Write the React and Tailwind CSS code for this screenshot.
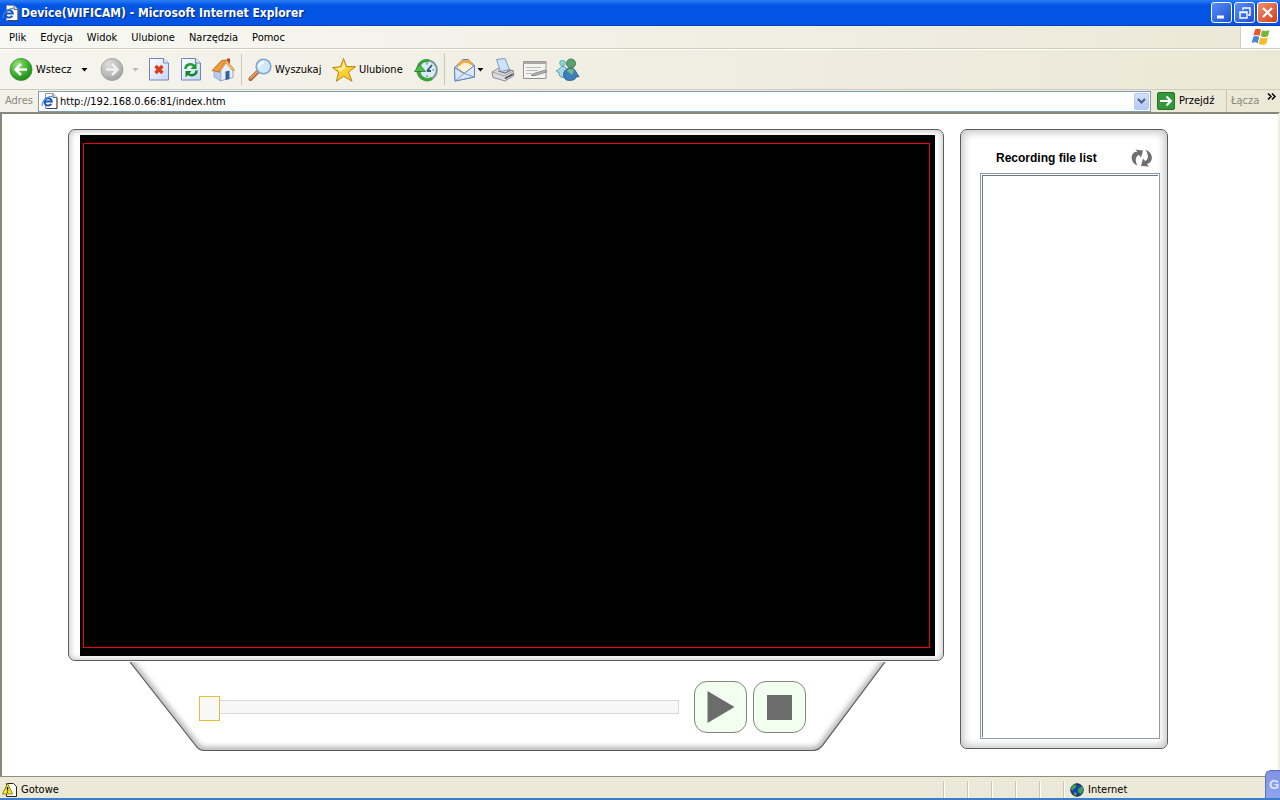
import React, { useState } from 'react'

/* ---------- icons ---------- */

const IePage = ({ className }) => (
  <svg className={className} width="17" height="16" viewBox="0 0 17 16">
    <path d="M4.500 .5h7.500l4 4v11h-11.500z" fill="#fff" stroke="#999" />
    <path d="M16 5v10.500H5.500" fill="none" stroke="#444" />
    <path d="M12 .5v4h4" fill="#ddd" stroke="#666" />
    <path d="M10.300 10.800A3.700 3.700 0 1 1 10.800 8.500H4.500" fill="none" stroke="#1c55b8" strokeWidth="2" />
    <path d="M1.500 13C-.5 10 6 3 11.500 3.500" fill="none" stroke="#3f8be0" strokeWidth="1.200" />
  </svg>
)

const RoundArrow = ({ grey }) => (
  <svg width="24" height="24" viewBox="0 0 24 24">
    <defs>
      <radialGradient id={grey ? 'raGrey' : 'raGreen'} cx="0.350" cy="0.250" r="0.850">
        <stop offset="0" stopColor={grey ? '#dcdcdc' : '#8fe070'} />
        <stop offset="0.600" stopColor={grey ? '#b9b9b9' : '#3aac2a'} />
        <stop offset="1" stopColor={grey ? '#989898' : '#17801a'} />
      </radialGradient>
    </defs>
    <circle cx="12" cy="11.500" r="11" fill={grey ? 'url(#raGrey)' : 'url(#raGreen)'} stroke={grey ? '#9a9a9a' : '#3b8a34'} strokeWidth="0.800" />
    <path d={grey ? 'M6 11.500h11M12 6l5.500 5.500-5.500 5.500' : 'M18 11.500H7M12 6L6.500 11.500l5.500 5.500'} fill="none" stroke={grey ? '#f1f1f1' : '#fff'} strokeWidth="2.600" />
  </svg>
)

const Sheet = ({ children }) => (
  <svg width="20" height="24" viewBox="0 0 20 24">
    <defs>
      <linearGradient id="sheet" x1="0" y1="0" x2="1" y2="1">
        <stop offset="0" stopColor="#fff" />
        <stop offset="1" stopColor="#c3d6f6" />
      </linearGradient>
    </defs>
    <path d="M.5 .5h14l5 4.500v17H.5z" fill="url(#sheet)" stroke="#7484b8" />
    <path d="M14.500 .5V5h5" fill="#e3ebfa" stroke="#7484b8" />
    {children}
  </svg>
)

const StopIcon = () => (
  <Sheet>
    <path d="M6.500 8l7 7M13.500 8l-7 7" stroke="#e03a1c" strokeWidth="3.400" />
  </Sheet>
)

const ReloadIcon = () => (
  <Sheet>
    <path d="M4.500 11c0-5 6-6 8.500-3" fill="none" stroke="#1f9a2c" strokeWidth="2.400" />
    <path d="M15.500 4.500V11H9.500z" fill="#1f9a2c" />
    <path d="M15.500 12.500c0 5-6 6-8.500 3" fill="none" stroke="#15842a" strokeWidth="2.400" />
    <path d="M4.500 19.500V13h6z" fill="#15842a" />
  </Sheet>
)

const HomeIcon = () => (
  <svg width="24" height="24" viewBox="0 0 24 24">
    <path d="M16 .5h3V8h-3z" fill="#c0432a" />
    <path d="M3 12l6 11 13-3.500V11L16 4z" fill="#e9f0fc" stroke="#7d93bd" strokeWidth="0.800" />
    <path d="M3 12v7l7 4V13z" fill="#b7caec" stroke="#7d93bd" strokeWidth="0.600" />
    <path d="M14.500 13.500l4-1V21l-4 1z" fill="#3460a8" />
    <path d="M1 12.500L10.500 2.500l5-.5L8 14z" fill="#eb9a3c" stroke="#b56a20" strokeWidth="0.800" />
    <path d="M15.500 2L23.500 12l-1.500 1-7-8-6.500 9.500L8 13z" fill="#f6c377" stroke="#c47b30" strokeWidth="0.700" />
  </svg>
)

const SearchIcon = () => (
  <svg width="24" height="24" viewBox="0 0 24 24">
    <path d="M2.500 21l7-7" stroke="#a85f35" strokeWidth="4" strokeLinecap="round" />
    <path d="M2.500 20.500l6.500-6.500" stroke="#e29a62" strokeWidth="2" strokeLinecap="round" />
    <circle cx="15.500" cy="8.500" r="7.300" fill="#cfeafc" stroke="#7ba6d6" strokeWidth="1.600" />
    <path d="M11 9a4.500 4.500 0 0 1 5-4.500" fill="none" stroke="#fff" strokeWidth="2.200" />
  </svg>
)

const StarIcon = () => (
  <svg width="24" height="24" viewBox="0 0 24 24">
    <path d="M11.500 .5l3 8 9 .2-7 5.500 3.500 9-8.500-5-7 5 2-9L.5 9.500l8-.7z" fill="#fcd030" stroke="#b98212" />
    <path d="M11.500 4l2 6-5 4-4-4 5.500-.5z" fill="#fff0a0" />
  </svg>
)

const HistoryIcon = () => (
  <svg width="24" height="24" viewBox="0 0 24 24">
    <circle cx="13" cy="12" r="9.800" fill="#d9ecf5" stroke="#7f969e" strokeWidth="2" />
    <path d="M13 5v1.500M20 12h-1.500M13 19v-1.500" stroke="#456" />
    <path d="M13 13l5-6M13 13h4" stroke="#335a78" strokeWidth="1.800" />
    <path d="M18 20.500C11 24 4.500 19 5 12.500" fill="none" stroke="#38a338" strokeWidth="3.400" />
    <path d="M15 3C9.500 1.500 5 5 5 9" fill="none" stroke="#38a338" strokeWidth="3" />
    <path d="M.5 13.500L5.500 6.500l6 7z" fill="#4fbe46" stroke="#207f28" strokeWidth="0.800" />
  </svg>
)

const MailIcon = () => (
  <svg width="24" height="24" viewBox="0 0 24 24">
    <path d="M1.500 9.500L10 1.500h5l6.500 6V19L2 23z" fill="#b5d2f5" stroke="#5f83bb" />
    <path d="M4 10l3-6 9-1.500 4 6-8 7z" fill="#fff3d8" stroke="#d09a4c" strokeWidth="0.800" />
    <path d="M5.500 7.500C8 2.500 15 2 18.500 6" fill="none" stroke="#f1aa3e" strokeWidth="2.800" />
    <path d="M1.500 9.500l9.500 6 10.500-8V19L2 23z" fill="#d9e9fb" stroke="#5f83bb" />
    <path d="M2 23l9-7.500L21.500 19" fill="none" stroke="#7b9fd2" />
  </svg>
)

const PrintIcon = () => (
  <svg width="24" height="24" viewBox="0 0 24 24">
    <path d="M1 14l7-4 14 2.500 1 5-9 5.500-12-3.500z" fill="#dcdcde" stroke="#85858b" strokeWidth="0.900" />
    <path d="M5.500 1.500L14 .5l4.500 11-9 2z" fill="#cfe2fb" stroke="#7292c6" strokeWidth="0.900" />
    <path d="M1 14l12.500 4L23 12.500" fill="none" stroke="#9e9ea4" />
    <path d="M7 13l7 2 6-3" fill="none" stroke="#77777c" strokeWidth="1.200" />
    <path d="M14 20.500l8-4.500" stroke="#4c4c50" strokeWidth="1.600" />
  </svg>
)

const EditIcon = () => (
  <svg width="24" height="24" viewBox="0 0 24 24">
    <path d="M.5 3.500h22.500v17H.5z" fill="#f3f3f1" stroke="#929292" />
    <path d="M.5 3.500h22.500v2.500H.5z" fill="#a8a8a8" />
    <path d="M3 9.500h15M3 12.500h12M3 15.500h6" stroke="#bbb" />
    <path d="M8 17.500l3-2 11.500-3.500 1 2L12 17.500z" fill="#bbb" stroke="#777" strokeWidth="0.800" />
  </svg>
)

const PeopleIcon = () => (
  <svg width="26" height="24" viewBox="0 0 26 24">
    <circle cx="7.500" cy="5" r="2.800" fill="#8fd6d0" stroke="#58a0aa" strokeWidth="0.800" />
    <path d="M1 12.500c3 1 3-4 7-4s4 4 4 8l-4 3c-3 0-4-2-4-5-1 0-2-1-3-2z" fill="#a5d9e5" stroke="#408c99" strokeWidth="0.800" />
    <path d="M8.500 17c0-4 3-7 7.500-7 4 0 4.500 4 8 8.500l-3 .5c0 2-3 3.500-6.500 3.500s-6-2-6-5.500z" fill="#3b7fb8" stroke="#24567f" strokeWidth="0.800" />
    <path d="M12 13c1-3 6-3 7 0l-2 4z" fill="#74b98a" />
    <circle cx="16" cy="5.500" r="4.500" fill="#5aa267" stroke="#2d6a55" strokeWidth="0.800" />
  </svg>
)

const WindowsFlag = () => (
  <svg width="20" height="18" viewBox="0 0 20 18">
    <path d="M4 1.500C6 .3 8 .5 10 1.700L8.500 8C6.500 6.700 4.500 6.800 2.500 7.800z" fill="#e8562a" />
    <path d="M11 2.200c2 1 4.500 1.200 7.500-.2L17 8.300c-3 1.200-5 1-7.300 0z" fill="#7ab536" />
    <path d="M2.200 8.800c2-1 4-1 6 .2L6.700 15.300c-2-1.200-4-1.200-6-.2z" fill="#4a86d8" />
    <path d="M9.300 9.400c2.500 1 5 1 7.500 0L15.200 16c-2.500 1-5 1-7.500-.2z" fill="#f6bd28" />
  </svg>
)

const SyncIcon = () => (
  <svg width="22" height="18" viewBox="0 0 22 18">
    <path d="M6.500 16.500C-2 13 -.5 2.500 6.500 2.500L4.500 .5 12 1.500 10 8.500 8 6C4 7.500 4 12.500 6.500 16.500z" fill="#6f6f6f" />
    <path d="M14.500 1C23 3.500 22.500 14 16 15l2 2.500-8-.5 2-7.500 2 2.500c4-1.500 3.500-7 .5-11z" fill="#6f6f6f" />
  </svg>
)

const GlobeIcon = () => (
  <svg width="14" height="14" viewBox="0 0 14 14">
    <circle cx="7" cy="7" r="6.200" fill="#1b3fae" stroke="#101c38" />
    <path d="M3 2c3-1 4 0 3 2s-3 2-4 4C.5 6 1 3.500 3 2zM8 6l4-3c2 3 1 6-1 8L8 9zM4 9l3 1-1 3-2-1z" fill="#39a44a" />
  </svg>
)

const WarnPage = () => (
  <svg width="16" height="16" viewBox="0 0 16 16">
    <path d="M4.500 1.500h7l3 3v10h-10z" fill="#fff" stroke="#222" />
    <path d="M5.500 1.500l5 10.500H.5z" fill="#f7ee1d" stroke="#8b8412" />
    <path d="M5.500 5V8.500M5.500 9.500v1.300" stroke="#111" strokeWidth="1.400" />
  </svg>
)

/* ---------- browser chrome ---------- */

const Caret = ({ className = 'text-black' }) => (
  <svg className={className} width="7" height="4" viewBox="0 0 7 4">
    <path d="M.5 0h6l-3 3.500z" fill="currentColor" />
  </svg>
)

const Separator = () => <div className="w-px self-stretch my-1 bg-[#c9c6b4]" />

const windowButtons = [
  { label: 'Minimize', color: 'bg-linear-to-br from-[#5a8df5] to-[#1d4fd6]', icon: <path d="M5 14h7" strokeWidth="3" /> },
  { label: 'Restore', color: 'bg-linear-to-br from-[#5a8df5] to-[#1d4fd6]', icon: <path d="M8 7V5h7v7h-2M5 9h7v6H5zM5 9.500h7" strokeWidth="1.400" /> },
  { label: 'Close', color: 'bg-linear-to-br from-[#ee8f6e] to-[#cf3c14]', icon: <path d="M5 5l9 9M14 5l-9 9" strokeWidth="2.200" /> },
]

const menus = ['Plik', 'Edycja', 'Widok', 'Ulubione', 'Narzędzia', 'Pomoc']

const TitleBar = () => (
  <header className="h-[26px] flex items-center pl-[2px] pr-[2px] bg-linear-to-b from-[#2a7ff5] from-0% via-[#0355e6] via-20% to-[#0453e4] border-b border-[#0342b8]">
    <IePage />
    <h1 className="ml-[2px] flex-1 text-[12px] font-bold text-white whitespace-nowrap [text-shadow:1px_1px_1px_#06257c]">
      Device(WIFICAM) - Microsoft Internet Explorer
    </h1>
    <div className="flex gap-[2px]">
      {windowButtons.map((b) => (
        <button key={b.label} aria-label={b.label} className={`size-[21px] rounded-[3px] border border-white ${b.color}`}>
          <svg width="19" height="19" viewBox="0 0 19 19" fill="none" stroke="#fff">{b.icon}</svg>
        </button>
      ))}
    </div>
  </header>
)

const MenuBar = () => (
  <nav className="h-[23px] flex items-stretch bg-linear-to-r from-[#f8f8f4] to-[#ebe8d7] border-b border-[#d0cdbb]">
    <div className="flex flex-1 items-center gap-[14px] pl-[9px] pt-[2px]">
      {menus.map((m) => <button key={m}>{m}</button>)}
    </div>
    <div className="w-10 flex items-center justify-center bg-white border-l border-[#d0cdbb]">
      <WindowsFlag />
    </div>
  </nav>
)

const ToolBar = () => (
  <div className="h-10 flex items-center pl-[9px] bg-linear-to-r from-[#f5f4ee] to-[#ebe8d7] border-t border-white">
    <button className="w-[72px] flex items-center gap-[3px]"><RoundArrow />Wstecz</button>
    <button aria-label="Wstecz - lista" className="w-[19px]"><Caret /></button>
    <button aria-label="Dalej" className="w-8"><RoundArrow grey /></button>
    <button aria-label="Dalej - lista" className="w-[17px]"><Caret className="text-[#b9b7a8]" /></button>
    <button aria-label="Zatrzymaj" className="w-8"><StopIcon /></button>
    <button aria-label="Odśwież" className="w-[30px]"><ReloadIcon /></button>
    <button aria-label="Strona główna" className="w-[30px]"><HomeIcon /></button>
    <Separator />
    <button className="ml-[6px] w-[84px] flex items-center gap-[3px]"><SearchIcon />Wyszukaj</button>
    <button className="w-[82px] flex items-center gap-[3px]"><StarIcon />Ulubione</button>
    <button aria-label="Historia" className="w-[30px]"><HistoryIcon /></button>
    <Separator />
    <button aria-label="Poczta" className="ml-2 w-[38px] flex items-center"><MailIcon /><Caret /></button>
    <button aria-label="Drukuj" className="w-8"><PrintIcon /></button>
    <button aria-label="Edytuj" className="w-8"><EditIcon /></button>
    <button aria-label="Messenger"><PeopleIcon /></button>
  </div>
)

const AddressBar = () => {
  const [url, setUrl] = useState('http://192.168.0.66:81/index.htm')

  return (
    <div className="h-[23px] flex items-center pl-[5px] bg-linear-to-r from-[#f3f2ea] to-[#ebe8d7] border-t border-[#d0cdbb]">
      <label htmlFor="address" className="w-[33px] text-[#8a887c]">Adres</label>
      <div className="flex-1 h-[21px] flex items-center gap-[2px] pl-[2px] pr-px bg-white border border-[#7f9db9]">
        <IePage className="shrink-0" />
        <input id="address" value={url} onChange={(e) => setUrl(e.target.value)} className="flex-1 min-w-0 pt-[2px] outline-none" />
        <button aria-label="Lista adresów" className="w-[15px] h-[17px] flex items-center justify-center rounded-[2px] bg-linear-to-b from-[#d3dffb] to-[#b4c8f6] border border-[#b7caf5]">
          <svg width="9" height="6" viewBox="0 0 9 6"><path d="M1 1l3.500 3.500L8 1" fill="none" stroke="#4d6185" strokeWidth="2" /></svg>
        </button>
      </div>
      <button className="ml-[6px] w-[69px] flex items-center gap-1">
        <svg width="18" height="18" viewBox="0 0 18 18">
          <rect x=".5" y=".5" width="17" height="17" rx="1.500" fill="#35953a" stroke="#1f7526" />
          <path d="M3 9h11M9.500 4.500L14 9l-4.500 4.500" fill="none" stroke="#fff" strokeWidth="2" />
        </svg>
        Przejdź
      </button>
      <div className="w-px self-stretch bg-[#c9c6b4]" />
      <button className="ml-1 w-9 text-left text-[#8a887c]">Łącza</button>
      <button aria-label="Więcej" className="w-[13px] self-start pt-[3px]">
        <svg width="9" height="7" viewBox="0 0 9 7"><path d="M1 .5l3 3-3 3M5 .5l3 3-3 3" fill="none" stroke="#000" strokeWidth="1.500" /></svg>
      </button>
    </div>
  )
}

/* ---------- camera page ---------- */

const Player = () => {
  const [position, setPosition] = useState(0)

  return (
    <section className="flex-1 min-w-0">
      <div className="rounded-[7px] border border-[#5c5c5c] pt-[5px] pb-1 pl-[11px] pr-2 bg-white shadow-[inset_0_0_6px_1px_#c4c4c4]">
        <div className="aspect-[855/521] bg-black py-2 pl-[3px] pr-[5px]">
          <div className="h-full border border-[#f00014]" />
        </div>
      </div>

      <div className="relative mt-px ml-[61px] mr-[58px] pt-[19px] pb-[18px] pl-[70px] pr-[80px]">
        <svg className="absolute inset-0 size-full" viewBox="0 0 757 89" preserveAspectRatio="none">
          <defs>
            <clipPath id="trayClip"><path d="M1 0L67 84Q70 88.500 76 88.500H684Q689 88.500 693 84L756 0z" /></clipPath>
            <filter id="trayBlur" x="-5%" y="-20%" width="110%" height="140%"><feGaussianBlur stdDeviation="2.500" /></filter>
          </defs>
          <g clipPath="url(#trayClip)">
            <path d="M-7 -10L67 84Q70 88.500 76 88.500H684Q689 88.500 693 84L764 -10" fill="none" stroke="#bbb" strokeWidth="8" filter="url(#trayBlur)" />
          </g>
          <path d="M1 0L67 84Q70 88.500 76 88.500H684Q689 88.500 693 84L756 0" fill="none" stroke="#5c5c5c" strokeWidth="1.200" />
        </svg>

        <div className="relative flex items-center">
          <input
            type="range"
            aria-label="Position"
            value={position}
            onChange={(e) => setPosition(Number(e.target.value))}
            className="flex-1 min-w-0 mr-[15px] h-[24px] appearance-none bg-transparent [&::-webkit-slider-runnable-track]:h-[14px] [&::-webkit-slider-runnable-track]:bg-[#f7f7f7] [&::-webkit-slider-runnable-track]:shadow-[inset_0_0_0_1px_#d9d9d9] [&::-webkit-slider-thumb]:appearance-none [&::-webkit-slider-thumb]:w-[21px] [&::-webkit-slider-thumb]:h-[25px] [&::-webkit-slider-thumb]:-mt-1 [&::-webkit-slider-thumb]:bg-[#f8f8f8] [&::-webkit-slider-thumb]:border [&::-webkit-slider-thumb]:border-[#e6bf30]"
          />
          <div className="flex gap-[6px]">
            <button aria-label="Play" className="w-[53px] h-[52px] flex items-center justify-center rounded-[13px] border border-[#7d8a7b] bg-[#f2fff0]">
              <svg width="28" height="32" viewBox="0 0 28 32"><path d="M.5 0v32L27.500 16z" fill="#6c6c6c" /></svg>
            </button>
            <button aria-label="Stop" className="w-[53px] h-[52px] flex items-center justify-center rounded-[13px] border border-[#7d8a7b] bg-[#f2fff0]">
              <span className="size-[25px] bg-[#6c6c6c]" />
            </button>
          </div>
        </div>
      </div>
    </section>
  )
}

const RecordingList = () => (
  <aside className="w-52 mb-[2px] flex flex-col rounded-[7px] border border-[#5c5c5c] pt-[14px] pb-[9px] pl-[19px] pr-[7px] bg-white shadow-[inset_0_0_8px_2px_#c0c0c0]">
    <div className="h-[29px] flex items-center justify-between pl-4 pr-[7px] pb-px">
      <label htmlFor="recordings" className="font-['Liberation_Sans',Arial,sans-serif] text-[12px] font-bold whitespace-nowrap">Recording file list</label>
      <button aria-label="Refresh"><SyncIcon /></button>
    </div>
    <div className="flex-1 flex p-px border border-[#8c9cac] bg-white">
      <select id="recordings" multiple className="flex-1 min-w-0 bg-white border-t border-l border-[#6c7884] outline-none" />
    </div>
  </aside>
)

const StatusBar = () => (
  <footer className="relative h-6 flex items-stretch pl-[2px] bg-[#ece9d8] border-t border-[#8e8d80] border-b-2 border-b-[#3b7ccb]">
    <div className="flex flex-1 items-center gap-[3px] pt-1"><WarnPage />Gotowe</div>
    {[0, 1, 2, 3, 4].map((i) => (
      <div key={i} className="w-6 mt-1 border-l border-[#c9c6b4] shadow-[inset_1px_0_0_#fff]" />
    ))}
    <div className="w-[217px] mt-1 flex items-center gap-1 pl-[6px] border-l border-[#c9c6b4] shadow-[inset_1px_0_0_#fff]">
      <GlobeIcon />Internet
    </div>
    <button className="absolute right-0 bottom-0 w-[15px] h-7 rounded-tl-[6px] border-t border-l border-[#5a6fc0] bg-linear-to-b from-[#7f92e4] to-[#8fa5ee] pl-[3px] text-left font-['Liberation_Sans',Arial,sans-serif] text-[13px] font-bold text-[#dfe6fb]">G</button>
  </footer>
)

export default function App() {
  return (
    <div className="min-h-screen flex flex-col bg-white font-['DejaVu_Sans_Condensed','DejaVu_Sans',sans-serif] text-[11px] leading-[14px] text-black">
      <TitleBar />
      <MenuBar />
      <ToolBar />
      <AddressBar />
      <main className="flex-1 flex items-start pt-[15px] pl-[66px] pr-[110px] border-t-2 border-x-2 border-t-[#85877b] border-l-[#85877b] border-r-[#f1efe2]">
        <div className="flex-1 flex gap-4">
          <Player />
          <RecordingList />
        </div>
      </main>
      <StatusBar />
    </div>
  )
}
